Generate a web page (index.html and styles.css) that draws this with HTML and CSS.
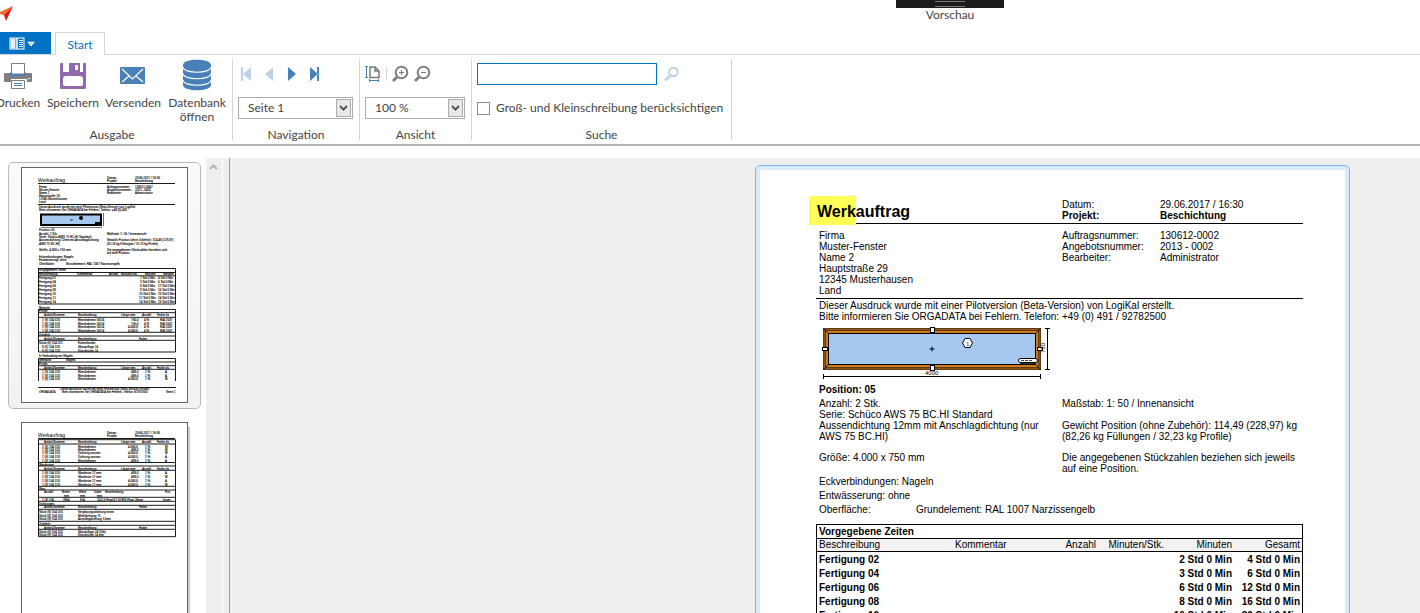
FILE: index.html
```html
<!DOCTYPE html>
<html lang="de">
<head>
<meta charset="utf-8">
<title>Vorschau</title>
<link rel="stylesheet" href="styles.css">
</head>
<body>
<header class="titlebar">
  <svg class="app-logo" width="14" height="16" viewBox="0 0 14 16" aria-hidden="true">
    <path d="M13 0L0 6v2l4 1z" fill="#f26a21"/><path d="M13 0L4 9l2 6z" fill="#e2121c"/>
  </svg>
  <div class="window-title">
    <div class="grip"></div>
    <h1 class="window-name">Vorschau</h1>
  </div>
</header>

<nav class="tabs">
  <button class="file-tab" aria-label="Datei">
    <svg width="26" height="14" viewBox="0 0 26 14">
      <rect x="1" y="1" width="14" height="11" fill="#0072c6" stroke="#fff"/>
      <rect x="1.500" y="1.500" width="5" height="10" fill="#e9f0f6"/><path d="M8 1v11" stroke="#fff" stroke-width="1.500"/>
      <path d="M10 3.500h4M10 5.500h4M10 7.500h4M10 9.500h4" stroke="#fff"/>
      <path d="M19.500 5.500h5l-2.500 3z" fill="#0072c6" stroke="#fff" stroke-width="1.300"/>
    </svg>
  </button>
  <button class="tab">Start</button>
</nav>

<section class="ribbon">
  <div class="group output">
    <div class="tools">
      <button class="tool print">
        <svg width="32" height="32" viewBox="0 0 32 32"><path d="M3 14h5v3h16v-3h5q1 0 1 1v7q0 1-1 1h-4v-3H9v3H3q-1 0-1-1v-7q0-1 1-1z" fill="#7f7f7f"/><path d="M8 13.500v3h16v-3" fill="#4a80b8"/><path d="M9.500 15V4.500h13V15z" fill="#fff" stroke="#7f7f7f"/><path d="M8 14v3h16v-3h-1v1H9v-1z" fill="#4a80b8"/><path d="M9.500 21.500h13v8h-13z" fill="#fff" stroke="#7f7f7f"/><path d="M12 24.500h8M12 26.500h8" stroke="#4a80b8"/><rect x="26" y="19" width="2" height="1" fill="#fff"/></svg>
        <span>Drucken</span></button>
      <button class="tool save">
        <svg width="32" height="32" viewBox="0 0 32 32"><path d="M3 5q0-1 1-1h2v9h20V4h3v25q0 1-1 1H4q-1 0-1-1z" fill="#9169ae"/><path d="M12 4h11v9H12z" fill="#9169ae"/><rect x="18" y="6" width="3" height="5" fill="#fff"/><path d="M6 20q0-3 3-3h14q3 0 3 3v5q0 2-2 2H8q-2 0-2-2z" fill="#fff"/></svg>
        <span>Speichern</span></button>
      <button class="tool send">
        <svg width="32" height="32" viewBox="0 0 32 32"><rect x="3" y="8" width="25" height="17" rx="1" fill="#4a80b8"/><path d="M5 10l10.500 10L26 10M5 23l7-6M26 23l-7-6" fill="none" stroke="#fff" stroke-width="1.200"/></svg>
        <span>Versenden</span></button>
      <button class="tool database">
        <svg width="32" height="32" viewBox="0 0 32 32"><path d="M2 6c0-7 28-7 28 0v20c0 7-28 7-28 0z" fill="#4a80b8"/><path d="M2 8c0 7 28 7 28 0M2 14.500c0 7 28 7 28 0M2 21c0 7 28 7 28 0" fill="none" stroke="#fff" stroke-width="1.200"/></svg>
        <span>Datenbank<br>öffnen</span></button>
    </div>
    <h2 class="caption">Ausgabe</h2>
  </div>

  <div class="group navigation">
    <div class="controls">
      <div class="icons nav-icons">
        <button class="icon" aria-label="Erste Seite"><svg width="16" height="16" viewBox="0 0 16 16" fill="#bdd2e6"><path d="M3 1h2v14H3zM13 1v14L5 8z"/></svg></button>
        <button class="icon" aria-label="Vorherige Seite"><svg width="16" height="16" viewBox="0 0 16 16" fill="#bdd2e6"><path d="M12 1v14L4 8z"/></svg></button>
        <button class="icon" aria-label="Nächste Seite"><svg width="16" height="16" viewBox="0 0 16 16" fill="#4a80b8"><path d="M4 1v14l8-7z"/></svg></button>
        <button class="icon" aria-label="Letzte Seite"><svg width="16" height="16" viewBox="0 0 16 16" fill="#4a80b8"><path d="M3 1v14l8-7zM10 1h2v14h-2z"/></svg></button>
      </div>
      <div class="drop">
        <select class="select" aria-label="Seite"><option>Seite 1</option></select>
        <svg class="arrow" width="16" height="18" viewBox="0 0 16 18"><rect x=".5" y=".5" width="14" height="17" fill="#e8e8e8" stroke="#aaa"/><path d="M4 7l3.500 3.500L11 7" fill="none" stroke="#555" stroke-width="2"/></svg>
      </div>
    </div>
    <h2 class="caption">Navigation</h2>
  </div>

  <div class="group view">
    <div class="controls">
      <div class="icons view-icons">
        <button class="icon" aria-label="Seitengröße"><svg width="16" height="18" viewBox="0 0 16 18" fill="none"><path d="M0 1.500h3M0 12.500h3M1.500 2v10M4.500 14v3M13.500 14v3M4 15.500h10" stroke="#4a80b8"/><path d="M5 2h5l4 4v6.500H5zM10 2v4h4" stroke="#777" stroke-width="1.500"/></svg></button>
        <span class="divider"></span>
        <button class="icon" aria-label="Vergrößern"><svg width="17" height="18" viewBox="0 0 17 18" fill="none"><path d="M5 12l-4 4" stroke="#7f7f7f" stroke-width="3"/><circle cx="9.500" cy="7.500" r="5.800" stroke="#7f7f7f" stroke-width="2"/><path d="M7 7.500h5M9.500 5v5" stroke="#4a80b8"/></svg></button>
        <button class="icon" aria-label="Verkleinern"><svg width="17" height="18" viewBox="0 0 17 18" fill="none"><path d="M5 12l-4 4" stroke="#7f7f7f" stroke-width="3"/><circle cx="9.500" cy="7.500" r="5.800" stroke="#7f7f7f" stroke-width="2"/><path d="M7 7.500h5" stroke="#4a80b8"/></svg></button>
      </div>
      <div class="drop">
        <select class="select" aria-label="Zoom"><option>100 %</option></select>
        <svg class="arrow" width="16" height="18" viewBox="0 0 16 18"><rect x=".5" y=".5" width="14" height="17" fill="#e8e8e8" stroke="#aaa"/><path d="M4 7l3.500 3.500L11 7" fill="none" stroke="#555" stroke-width="2"/></svg>
      </div>
    </div>
    <h2 class="caption">Ansicht</h2>
  </div>

  <div class="group search">
    <div class="controls">
      <div class="icons search-row">
        <input class="search-box" type="text" aria-label="Suchbegriff">
        <button class="icon" aria-label="Suchen"><svg width="16" height="16" viewBox="0 0 16 16" fill="none" stroke="#bdd2e6"><path d="M6 10l-5 4.500" stroke-width="3"/><circle cx="9.500" cy="6" r="4.300" stroke-width="2"/></svg></button>
      </div>
      <label class="check"><input type="checkbox" class="box"><span>Groß- und Kleinschreibung berücksichtigen</span></label>
    </div>
    <h2 class="caption">Suche</h2>
  </div>
</section>

<main class="workspace">
  <aside class="thumbs">
    <button class="thumb selected" aria-label="Seite 1">
      <svg class="mini" width="165" height="234" viewBox="22 168 165 234">
        <g class="t">
          <text x="38" y="181.500" class="h">Werkauftrag</text>
          <text x="107" y="179">Datum:</text><text x="135" y="179">29.06.2017 / 16:30</text>
          <text x="107" y="182">Projekt:</text><text x="135" y="182">Beschichtung</text>
          <text x="39" y="188">Firma</text><text x="39" y="191">Muster-Fenster</text><text x="39" y="194">Name 2</text><text x="39" y="197">Hauptstraße 29</text><text x="39" y="200">12345 Musterhausen</text><text x="39" y="203">Land</text>
          <text x="107" y="188">Auftragsnummer:</text><text x="107" y="191">Angebotsnummer:</text><text x="107" y="194">Bearbeiter:</text>
          <text x="135" y="188">130612-0002</text><text x="135" y="191">2013 - 0002</text><text x="135" y="194">Administrator</text>
          <text x="39" y="208">Dieser Ausdruck wurde mit einer Pilotversion (Beta-Version) von LogiKal</text>
          <text x="39" y="211">Bitte informieren Sie ORGADATA bei Fehlern. Telefon: +49 (0) 491</text>
          <text x="39" y="231">Position: 05</text><text x="39" y="235">Anzahl: 2 Stk.</text><text x="39" y="238">Serie: Schüco AWS 75 BC.HI Standard</text><text x="39" y="241">Aussendichtung 12mm mit Anschlagdichtung</text><text x="39" y="245">AWS 75 BC.HI)</text>
          <text x="107" y="235">Maßstab: 1: 50 / Innenansicht</text><text x="107" y="241">Gewicht Position (ohne Zubehör): 114,49 (228,97)</text><text x="107" y="245">(82,26 kg Füllungen / 32,23 kg Profile)</text>
          <text x="39" y="251">Größe: 4.000 x 750 mm</text><text x="107" y="251">Die angegebenen Stückzahlen beziehen sich</text><text x="107" y="254">auf eine Position.</text>
          <text x="39" y="258">Eckverbindungen: Nageln</text><text x="39" y="261">Entwässerung: ohne</text><text x="39" y="265">Oberfläche:</text><text x="66" y="265">Grundelement: RAL 1007 Narzissengelb</text>
          <text x="39" y="271">Vorgegebene Zeiten</text>
          <text x="39" y="275">Beschreibung</text><text x="77" y="275">Kommentar</text><text x="109" y="275">Anzahl</text><text x="121" y="275">Minuten/Stk.</text><text x="145" y="275">Minuten</text><text x="163" y="275">Gesamt</text>
          <text x="39" y="279">Fertigung 02</text><text x="140" y="279">2 Std 0 Min</text><text x="158" y="279">4 Std 0 Min</text>
          <text x="39" y="283">Fertigung 04</text><text x="140" y="283">3 Std 0 Min</text><text x="158" y="283">6 Std 0 Min</text>
          <text x="39" y="287">Fertigung 06</text><text x="140" y="287">6 Std 0 Min</text><text x="158" y="287">12 Std 0 Min</text>
          <text x="39" y="291">Fertigung 08</text><text x="140" y="291">8 Std 0 Min</text><text x="158" y="291">16 Std 0 Min</text>
          <text x="39" y="295">Fertigung 10</text><text x="139" y="295">10 Std 0 Min</text><text x="158" y="295">20 Std 0 Min</text>
          <text x="39" y="299">Fertigung 12</text><text x="139" y="299">12 Std 0 Min</text><text x="158" y="299">24 Std 0 Min</text>
          <text x="39" y="303">Fertigung 14</text><text x="139" y="303">14 Std 0 Min</text><text x="158" y="303">28 Std 0 Min</text>
          <text x="39" y="308.500">Material</text><text x="39" y="312">Profile</text>
          <text x="44" y="316">Artikel-Nummer</text><text x="78" y="316">Beschreibung</text><text x="121" y="316">Länge mm</text><text x="142" y="316">Anzahl</text><text x="157" y="316">Farbe i/a</text>
          <text x="42" y="321">1 (9) 104 320</text><text x="78" y="321">Blendrahmen 50/24</text><text x="131" y="321">750,0</text><text x="144" y="321">4 %</text><text x="160" y="321">RAL1007</text>
          <text x="42" y="324.500">1 (9) 104 320</text><text x="78" y="324.500">Blendrahmen 50/24</text><text x="131" y="324.500">750,0</text><text x="144" y="324.500">4 %</text><text x="160" y="324.500">RAL1007</text>
          <text x="42" y="328">1 (9) 104 320</text><text x="78" y="328">Blendrahmen 50/24</text><text x="128" y="328">4.000,0</text><text x="144" y="328">4 %</text><text x="160" y="328">RAL1007</text>
          <text x="42" y="331.800">1 (9) 104 320</text><text x="78" y="331.800">Blendrahmen 50/24</text><text x="128" y="331.800">4.000,0</text><text x="144" y="331.800">4 %</text><text x="160" y="331.800">RAL1007</text>
          <text x="39" y="335.500">Zubehör</text><text x="44" y="340">Artikel-Nummer</text><text x="78" y="340">Beschreibung</text><text x="139" y="340">Farbe</text>
          <text x="39" y="344">Stück (6) 104 321</text><text x="78" y="344">Eckverbinder</text><text x="42" y="348">8 (6) 104 320</text><text x="78" y="348">Glasauflage 24</text><text x="42" y="351.700">8 (6) 104 320</text><text x="78" y="351.700">Klotzbrücke 24</text>
          <text x="39" y="357">In Verbindung mit Nägeln</text><text x="39" y="361">Gehäuse</text><text x="66" y="361">Nageln</text><text x="39" y="365">Profile</text>
          <text x="44" y="369">Artikel-Nummer</text><text x="78" y="369">Beschreibung</text><text x="121" y="369">Länge mm</text><text x="142" y="369">Anzahl</text><text x="157" y="369">Farbe i/a</text>
          <text x="42" y="373">1 (9) 104 320</text><text x="78" y="373">Blendrahmen</text><text x="131" y="373">489,0</text><text x="145" y="373">1 %</text><text x="165" y="373">A</text>
          <text x="42" y="377">1 (9) 104 320</text><text x="78" y="377">Blendrahmen</text><text x="131" y="377">489,0</text><text x="145" y="377">1 %</text><text x="165" y="377">A</text>
          <text x="42" y="380">1 (9) 104 320</text><text x="78" y="380">Blendrahmen</text><text x="128" y="380">4.000,0</text><text x="145" y="380">1 %</text><text x="165" y="380">M</text>
          <text x="60" y="389.500">Dieser Ausdruck wurde mit einer Pilotversion (Beta-Version) erstellt</text><text x="39" y="392.500">ORGADATA</text><text x="62" y="392.500">Bitte informieren Sie ORGADATA bei Fehlern. Telefon 92782500</text><text x="166" y="392.500">Seite 1</text>
        </g>
        <path class="l" d="M38 183.500h137M38 204.500h137M38 268.500h137.500v35.500H38.500v-35.500M38 272.500h137M38 275.800h137M38.500 309.500h137V352h-137zM38 312.700h137M38 317.300h137M38 332.300h137M38 336h137M38 340.300h137M38.500 381v-22.500h137V381M38 362h137M38 365.700h137M38 369.300h137M38 387.500h138"/>
        <rect x="41" y="214.500" width="60" height="10.500" fill="#a6c8ee" stroke="#000" stroke-width="2"/>
        <path d="M41 227.500h61M103.500 213v13" stroke="#333" stroke-width=".7"/><circle cx="81" cy="218" r="2"/><path d="M70.500 219.500h2v1h-2zM95 222h5v2h-5z"/>
      </svg>
    </button>
    <button class="thumb" aria-label="Seite 2">
      <svg class="mini" width="165" height="234" viewBox="22 423 165 234">
        <g class="t">
          <text x="38" y="436.500" class="h">Werkauftrag</text><text x="107" y="434">Datum:</text><text x="135" y="434">29.06.2017 / 16:30</text><text x="107" y="437">Projekt:</text><text x="135" y="437">Beschichtung</text>
          <text x="44" y="443">Artikel-Nummer</text><text x="78" y="443">Beschreibung</text><text x="121" y="443">Länge mm</text><text x="142" y="443">Anzahl</text><text x="157" y="443">Farbe i/a</text>
          <text x="42" y="447.500">1 (9) 104 320</text><text x="78" y="447.500">Blendrahmen</text><text x="128" y="447.500">4.000,0</text><text x="145" y="447.500">1 %</text><text x="165" y="447.500">M</text>
          <text x="42" y="450.500">1 (9) 104 320</text><text x="78" y="450.500">Blendrahmen</text><text x="131" y="450.500">489,0</text><text x="145" y="450.500">1 %</text><text x="165" y="450.500">M</text>
          <text x="42" y="454">1 (9) 104 320</text><text x="78" y="454">Dichtung aussen</text><text x="128" y="454">4.000,0</text><text x="145" y="454">1 %</text><text x="165" y="454">M</text>
          <text x="42" y="458">1 (9) 104 320</text><text x="78" y="458">Dichtung aussen</text><text x="128" y="458">4.000,0</text><text x="145" y="458">1 %</text><text x="165" y="458">A</text>
          <text x="42" y="462">1 (9) 104 320</text><text x="78" y="462">Blendrahmen</text><text x="131" y="462">489,0</text><text x="145" y="462">1 %</text><text x="165" y="462">A</text>
          <text x="39" y="465.500">Glasleisten</text><text x="44" y="469.500">Artikel-Nummer</text><text x="78" y="469.500">Beschreibung</text><text x="121" y="469.500">Länge mm</text><text x="142" y="469.500">Anzahl</text><text x="157" y="469.500">Farbe i/a</text>
          <text x="42" y="474">1 (9) 104 320</text><text x="78" y="474">Glasleiste 22 mm</text><text x="131" y="474">489,0</text><text x="145" y="474">1 %</text><text x="165" y="474">A</text>
          <text x="42" y="478">1 (9) 104 320</text><text x="78" y="478">Glasleiste 22 mm</text><text x="131" y="478">489,0</text><text x="145" y="478">1 %</text><text x="165" y="478">M</text>
          <text x="42" y="482">1 (9) 104 320</text><text x="78" y="482">Glasleiste 22 mm</text><text x="128" y="482">4.000,0</text><text x="145" y="482">1 %</text><text x="165" y="482">A</text>
          <text x="42" y="486">1 (9) 104 320</text><text x="78" y="486">Glasleiste 22 mm</text><text x="128" y="486">4.000,0</text><text x="145" y="486">1 %</text><text x="165" y="486">M</text>
          <text x="39" y="489.500">Glas</text><text x="44" y="493">Anzahl</text><text x="62" y="493">Breite</text><text x="79" y="493">Höhe</text><text x="94" y="493">Dicke</text><text x="105" y="493">Beschreibung</text><text x="165" y="493">Pos</text>
          <text x="64" y="497">mm</text><text x="80" y="497">mm</text><text x="97" y="497">mm</text>
          <text x="42" y="501">1 (9) 104</text><text x="63" y="501">3904</text><text x="80" y="501">654</text><text x="97" y="501">24,0 6 Float/12 SZR/6 Float 24mm</text><text x="163" y="501">Innen</text>
          <text x="39" y="504.500">Dichtungen</text><text x="44" y="508">Artikel-Nummer</text><text x="78" y="508">Beschreibung</text><text x="139" y="508">Farbe</text>
          <text x="39" y="513">Stück (9) 104 320</text><text x="78" y="513">Verglasungsdichtung innen</text><text x="39" y="516.500">Stück (9) 104 320</text><text x="78" y="516.500">Mitteldichtung 75</text><text x="39" y="520">Stück (9) 104 320</text><text x="78" y="520">Anschlagdichtung 12mm</text>
          <text x="39" y="524.500">Zubehör</text><text x="44" y="528.500">Artikel-Nummer</text><text x="78" y="528.500">Beschreibung</text><text x="139" y="528.500">Farbe</text>
          <text x="39" y="532.500">Stück (9) 104 320</text><text x="78" y="532.500">Glasauflage 24 (50x)</text><text x="39" y="536">Stück (9) 104 320</text><text x="78" y="536">Klotzbrücke 24 mm</text>
        </g>
        <path class="l" d="M38 438.500h137M38.500 439.700h137v97h-137zM38 444h137M38 462.500h137M38 466h137M38 470.300h137M38 486.300h137M38 490h137M38 497.300h137M38 501.300h137M38 505.300h137M38 509.300h137M38 521.300h137M38 525.300h137M38 529.300h137"/>
      </svg>
    </button>
  </aside>
  <div class="scrollbar"><svg width="16" height="16" viewBox="0 0 16 16"><path d="M4 11l3.500-3.500L11 11" fill="none" stroke="#b4b4b4" stroke-width="2"/></svg></div>
  <div class="splitter"></div>

  <section class="preview">
    <article class="sheet">
      <div class="head cols">
        <h2 class="doc-title"><mark class="mark">Werk</mark>auftrag</h2>
        <p>Datum:<br><b>Projekt:</b></p>
        <p>29.06.2017 / 16:30<br><b>Beschichtung</b></p>
      </div>
      <div class="address cols">
        <p>Firma<br>Muster-Fenster<br>Name 2<br>Hauptstraße 29<br>12345 Musterhausen<br>Land</p>
        <p>Auftragsnummer:<br>Angebotsnummer:<br>Bearbeiter:</p>
        <p>130612-0002<br>2013 - 0002<br>Administrator</p>
      </div>
      <p class="notice">Dieser Ausdruck wurde mit einer Pilotversion (Beta-Version) von LogiKal erstellt.<br>Bitte informieren Sie ORGADATA bei Fehlern. Telefon: +49 (0) 491 / 92782500</p>
      <svg class="drawing" width="232" height="54" viewBox="820 325 232 54">
        <rect x="823" y="328" width="218" height="42" fill="#3b2412"/>
        <rect x="824.500" y="329.500" width="215" height="39" fill="none" stroke="#8b5515" stroke-width="2"/>
        <rect x="827" y="332" width="210" height="34" fill="none" stroke="#d07a18" stroke-width="2"/>
        <path d="M823 328l6 6M1041 328l-6 6M823 370l6-6M1041 370l-6-6" stroke="#111"/>
        <rect x="828.500" y="333.500" width="207" height="31" fill="#a6c8ee" stroke="#000"/>
        <path d="M929.500 349h5M932 346.500v5" stroke="#000"/>
        <path d="M962.500 343l2.500-4.500h5l2.500 4.500-2.500 4.500h-5z" fill="#fff" stroke="#000"/>
        <g fill="#fff" stroke="#000"><rect x="930.500" y="327.500" width="4" height="5"/><rect x="930.500" y="365.500" width="4" height="5"/><rect x="822.500" y="347.500" width="5" height="3"/><rect x="1037.500" y="347.500" width="5" height="3"/><rect x="1018.500" y="358.500" width="19" height="4" rx="2"/></g>
        <path d="M1021 360.500h12" stroke="#444" stroke-dasharray="3 1"/><path d="M1020 363.500h16" stroke="#333"/>
        <path d="M823 376.500h218M823.500 374v5M1040.500 374v5M1047.500 328v42M1045 328.500h5M1045 369.500h5" stroke="#000"/>
        <text x="966" y="346" class="dim blue">1</text><text x="925" y="375" class="dim">4000</text><text class="dim" transform="translate(1045 353) rotate(-90)">750</text>
      </svg>
      <p class="position"><b>Position: 05</b></p>
      <div class="details cols two">
        <p>Anzahl: 2 Stk.<br>Serie: Schüco AWS 75 BC.HI Standard<br>Aussendichtung 12mm mit Anschlagdichtung (nur<br>AWS 75 BC.HI)</p>
        <p>Maßstab: 1: 50 / Innenansicht<br><br>Gewicht Position (ohne Zubehör): 114,49 (228,97) kg<br>(82,26 kg Füllungen / 32,23 kg Profile)</p>
      </div>
      <div class="size cols two">
        <p>Größe: 4.000 x 750 mm</p>
        <p>Die angegebenen Stückzahlen beziehen sich jeweils<br>auf eine Position.</p>
      </div>
      <div class="finish">
        <p>Eckverbindungen: Nageln</p>
        <p>Entwässerung: ohne</p>
        <p class="surface"><span>Oberfläche:</span><span>Grundelement: RAL 1007 Narzissengelb</span></p>
      </div>
      <table class="times">
        <caption>Vorgegebene Zeiten</caption>
        <colgroup><col class="c-name"><col><col class="c-count"><col class="c-each"><col class="c-each"><col class="c-each"></colgroup>
        <thead><tr><th>Beschreibung</th><th>Kommentar</th><th>Anzahl</th><th>Minuten/Stk.</th><th>Minuten</th><th>Gesamt</th></tr></thead>
        <tbody>
          <tr><td>Fertigung 02</td><td></td><td></td><td></td><td>2 Std 0 Min</td><td>4 Std 0 Min</td></tr>
          <tr><td>Fertigung 04</td><td></td><td></td><td></td><td>3 Std 0 Min</td><td>6 Std 0 Min</td></tr>
          <tr><td>Fertigung 06</td><td></td><td></td><td></td><td>6 Std 0 Min</td><td>12 Std 0 Min</td></tr>
          <tr><td>Fertigung 08</td><td></td><td></td><td></td><td>8 Std 0 Min</td><td>16 Std 0 Min</td></tr>
          <tr><td>Fertigung 10</td><td></td><td></td><td></td><td>10 Std 0 Min</td><td>20 Std 0 Min</td></tr>
        </tbody>
      </table>
    </article>
  </section>
</main>
</body>
</html>
```
FILE: styles.css
```css
* { box-sizing: border-box; }
body {
  margin: 0;
  height: 100vh;
  overflow: hidden;
  display: flex;
  flex-direction: column;
  background: #fff;
  color: #444;
  font: 12px/14px Lato, "Open Sans", sans-serif;
}
button { margin: 0; padding: 0; border: 0; background: none; color: inherit; font: inherit; }
h1, h2, p { margin: 0; font: inherit; }
svg { display: block; flex: none; }

.titlebar { flex: none; display: flex; justify-content: space-between; height: 32px; padding-right: 416px; }
.app-logo { margin-top: 6px; }
.window-title { width: 108px; text-align: center; }
.grip { height: 8px; background: #1c1c1c; display: flex; justify-content: center; }
.grip::after { content: ""; width: 30px; height: 4px; margin-top: 1px; border: solid #777; border-width: 1px 0; }

.tabs { flex: none; display: flex; height: 23px; border-bottom: 1px solid #d4d4d4; }
.file-tab { width: 51px; height: 22px; padding-left: 9px; background: #0072c6; }
.file-tab svg { margin-top: 2px; }
.tab { width: 50px; height: 23px; margin-left: 4px; padding-top: 2px; border: 1px solid #d4d4d4; border-bottom: 0; background: #fff; color: #0072c6; }

.ribbon { flex: none; display: flex; height: 91px; padding-top: 4px; border-bottom: 2px solid #b4b4b4; }
.group { display: flex; flex-direction: column; height: 81px; border-right: 1px solid #d4d4d4; }
.output { width: 233px; }
.navigation { width: 127px; }
.view { width: 112px; }
.search { width: 260px; }
.caption { margin-top: 9px; text-align: center; }
.output .caption { padding-right: 8px; }
.tools { display: flex; align-items: flex-start; height: 60px; margin-left: -10px; }
.tool { display: flex; flex-direction: column; align-items: center; gap: 5px; white-space: nowrap; }
.print { width: 56px; }
.save { width: 54px; }
.send { width: 66px; }
.database { width: 62px; }
.controls { display: flex; flex-direction: column; gap: 12px; height: 60px; padding: 4px 6px 0 5px; }
.icons { display: flex; align-items: center; height: 22px; }
.nav-icons { gap: 7px; }
.view-icons { gap: 5px; }
.divider { width: 1px; height: 14px; background: #d4d4d4; }
.drop { display: flex; align-items: center; position: relative; }
.select { appearance: none; width: 100%; height: 22px; padding: 0 9px; border: 1px solid #ababab; border-radius: 0; background: #fff; color: #444; font: inherit; }
.arrow { position: absolute; right: 1px; top: 2px; pointer-events: none; }
.search-row { gap: 7px; }
.search-box { width: 180px; height: 22px; border: 1px solid #0072c6; background: #fff; font: inherit; }
.check { display: flex; align-items: center; gap: 6px; height: 22px; white-space: nowrap; }
.box { appearance: none; flex: none; width: 13px; height: 13px; margin: 0; border: 1px solid #8c8c8c; background: #fff; }

.workspace { flex: 1; min-height: 0; display: flex; margin-top: 12px; overflow: hidden; background: #efefef; }
.thumbs { flex: none; width: 206px; padding: 4px 5px 0 8px; background: #fff; }
.thumb { display: block; width: 193px; padding: 4px 12px 5px; border: 1px solid transparent; border-radius: 5px; }
.selected { border-color: #b9b9b9; background: linear-gradient(#fafafa, #f2f2f2); }
.thumb + .thumb { margin-top: 8px; }
.mini { box-sizing: content-box; border: 1px solid #646464; background: #fff; }
.thumb:not(.selected) .mini { box-shadow: 2px 5px 1px #ccc; }
.t { font: 3px "Liberation Sans", Arial, sans-serif; fill: #000; stroke: #000; stroke-width: .1px; }
.h { font-size: 5px; stroke: none; }
.l { fill: none; stroke: #000; stroke-width: .9px; }
.scrollbar { flex: none; width: 16px; }
.splitter { flex: none; width: 8px; border-left: 1px solid #fff; border-right: 1px solid #a0a0a0; }

.preview { flex: 1; display: flex; justify-content: flex-end; align-items: flex-start; padding: 7px 70px 0 20px; }
.sheet {
  width: 595px;
  min-height: 842px;
  padding: 33px 46px 40px 60px;
  border: 1px solid #7eb4ea;
  border-radius: 5px;
  background: #fff;
  box-shadow: inset 0 0 0 4px #d9ebfb;
  color: #000;
  font: 10px/11px "Liberation Sans", Arial, sans-serif;
}
.cols { display: grid; grid-template-columns: 243px 98px 1fr; padding-left: 3px; white-space: nowrap; }
.two { grid-template-columns: 243px 1fr; }
.head { height: 25px; border-bottom: 1px solid #000; }
.doc-title { margin-left: -2px; font-size: 16px; font-weight: bold; line-height: 25px; }
.mark { background: #ffff55; color: inherit; margin-left: -8px; padding: 7px 0 5px 8px; }
.address { height: 75px; padding-top: 6px; border-bottom: 1px solid #000; }
.notice { padding: 1px 0 0 3px; white-space: nowrap; }
.drawing { margin: 3px 0 0 4px; }
.dim { font-size: 6px; }
.blue { fill: #2030c0; }
.position { padding: 5px 0 0 3px; }
.details { padding-top: 3px; }
.size { padding-top: 10px; }
.finish { padding: 1px 0 7px 3px; line-height: 14px; }
.surface { display: flex; }
.surface span:first-child { width: 97px; }

.times { width: 100%; table-layout: fixed; border-collapse: separate; border-spacing: 0; border: 1px solid #000; border-top: 0; }
.times caption { height: 15px; padding-left: 2px; border: 1px solid #000; font-weight: bold; line-height: 13px; text-align: left; }
.times th { height: 13px; padding: 0 2px; background: #f2f2f2; border-bottom: 1px solid #000; font-weight: normal; line-height: 12px; text-align: right; }
.times td { height: 14px; padding: 2px 2px 0; font-weight: bold; line-height: 12px; text-align: right; white-space: nowrap; }
.times th:nth-child(-n+2), .times td:first-child { text-align: left; }
.c-name { width: 136px; }
.c-count { width: 70px; }
.c-each { width: 68px; }
```
